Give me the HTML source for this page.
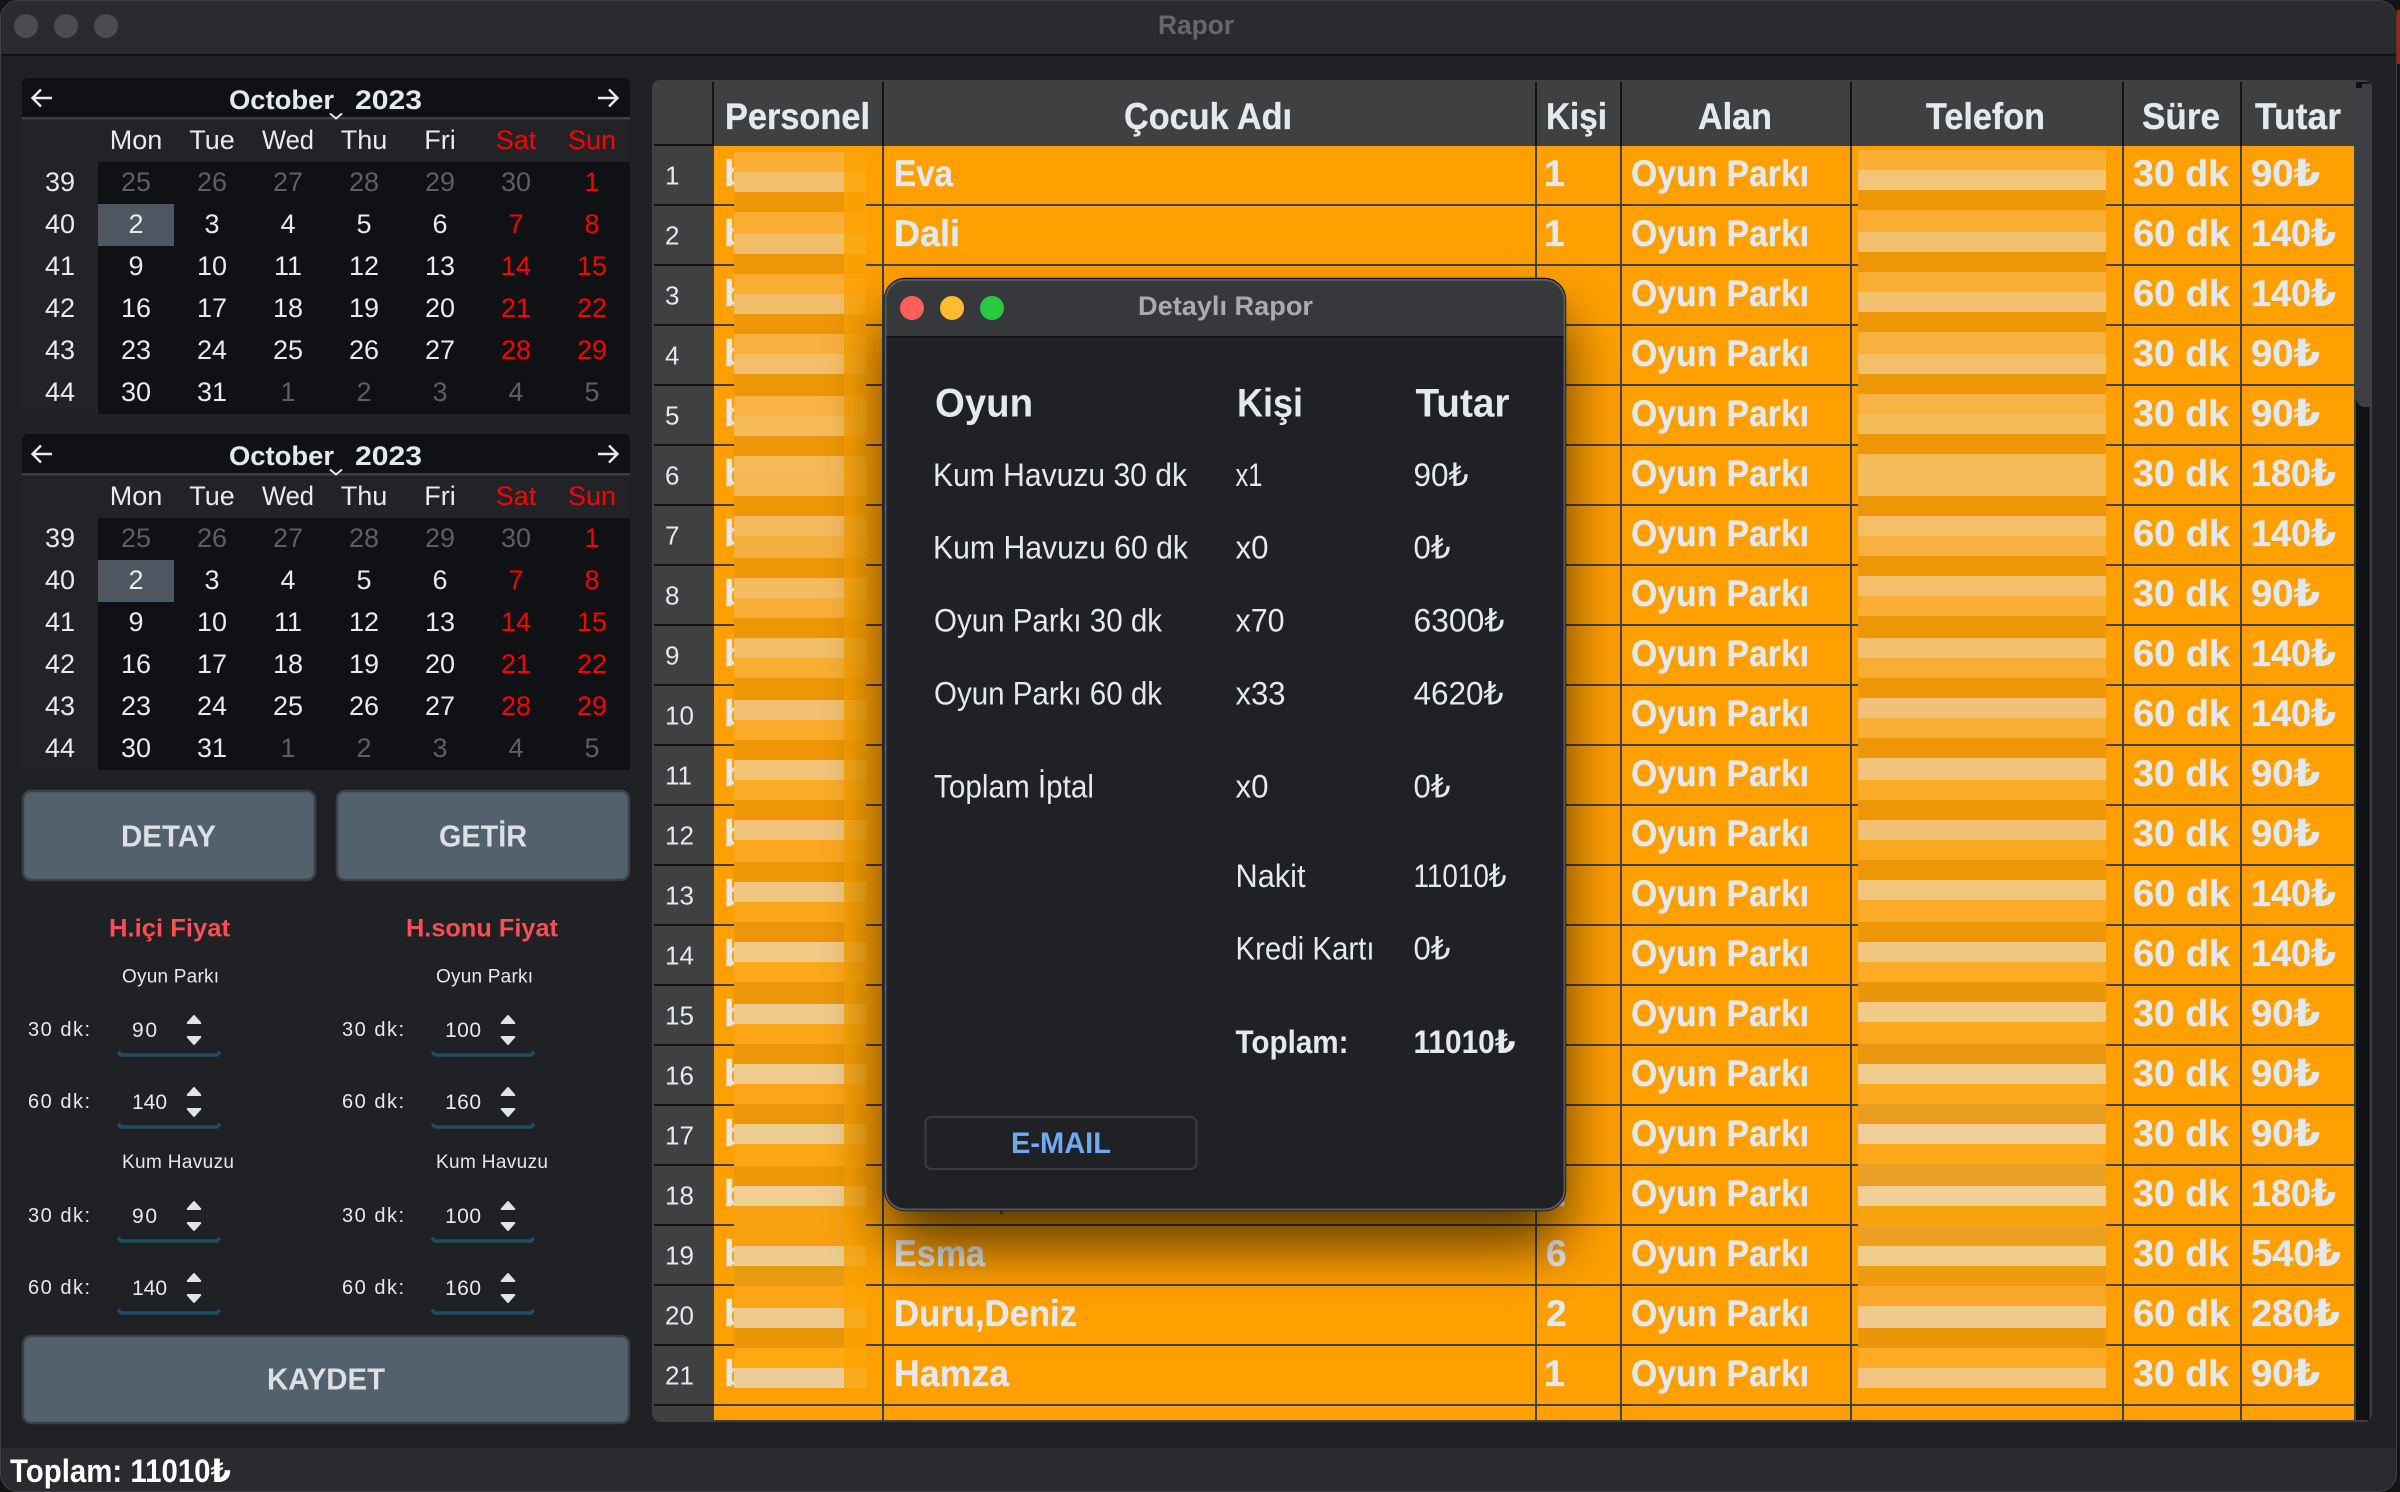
<!DOCTYPE html>
<html lang="tr"><head><meta charset="utf-8"><title>Rapor</title>
<style>
html,body{margin:0;padding:0;background:#141416;width:2400px;height:1492px;overflow:hidden}
svg{display:block}
text{font-family:"Liberation Sans","DejaVu Sans",sans-serif;fill:#e5e8ec;white-space:pre}
.c text{font-size:27px;text-anchor:middle;fill:#e8eaed}
.c .m{fill:#5e5f62}
.c .r{fill:#ff0000}
.d{font-size:37px;font-weight:700;stroke:#e5e8ec;stroke-width:.3px}
.n{font-size:26px}
.h{font-size:37px;font-weight:700;stroke:#e5e8ec;stroke-width:.3px}
.t{font-size:32px}
.b{font-size:32px;font-weight:700}
.s{font-size:20px}
.v{font-size:21px}
</style></head><body>
<svg xmlns="http://www.w3.org/2000/svg" width="2400" height="1492" viewBox="0 0 2400 1492">
<defs>
<clipPath id="win"><rect x="0" y="0" width="2397" height="1492" rx="18"/></clipPath>
<clipPath id="tbl"><rect x="652" y="80" width="1720" height="1342" rx="8"/></clipPath>
<clipPath id="dlg"><rect x="885" y="279" width="680" height="931" rx="20"/></clipPath>
<filter id="sh" x="-20%" y="-20%" width="140%" height="140%"><feGaussianBlur stdDeviation="30"/></filter>
<g id="spin">
<polygon points="187.7,1023 200.3,1023 194,1016" fill="#e1e4e7" stroke="#e1e4e7" stroke-width="2" stroke-linejoin="round"/>
<polygon points="187.7,1037 200.3,1037 194,1044" fill="#e1e4e7" stroke="#e1e4e7" stroke-width="2" stroke-linejoin="round"/>
<path d="M118 1052l3 3h96l3-3" fill="none" stroke="#1f4d66" stroke-width="3.5"/>
</g>
<g id="calbg">
<rect x="22" y="78" width="608" height="336" rx="6" fill="#222326"/>
<path d="M22 118V84a6 6 0 0 1 6-6H624a6 6 0 0 1 6 6V118Z" fill="#101114"/>
<rect x="22" y="117" width="608" height="2.5" fill="#3d3e40"/>
<rect x="98" y="162" width="532" height="252" fill="#101114"/>
<rect x="98" y="204" width="76" height="42" fill="#4e5661"/>
<path d="M52 98H33M41 89.5L32.5 98L41 106.5" fill="none" stroke="#e8eaed" stroke-width="2.4"/>
<path d="M598 98H617M609 89.5L617.5 98L609 106.5" fill="none" stroke="#e8eaed" stroke-width="2.4"/>
<path d="M330 113.5L336 118.5L342 113.5" fill="none" stroke="#e8eaed" stroke-width="2"/>
</g>
</defs>

<g clip-path="url(#win)">
<rect x="0" y="0" width="2400" height="1492" fill="#202124"/>
<rect x="0" y="0" width="2400" height="54" fill="#2a2b2e"/>
<rect x="0" y="54" width="2400" height="1.5" fill="#0b0b0c"/>
<circle cx="26" cy="26" r="12" fill="#4b4c4f"/><circle cx="66" cy="26" r="12" fill="#4b4c4f"/><circle cx="106" cy="26" r="12" fill="#4b4c4f"/>
<text x="1158" y="34" font-size="27" font-weight="700" style="fill:#66676a" textLength="76" lengthAdjust="spacingAndGlyphs">Rapor</text>
<rect x="0" y="1448" width="2400" height="44" fill="#2a2b2e"/>
<text x="10" y="1482" font-size="32" font-weight="700" style="fill:#fff" textLength="221" lengthAdjust="spacingAndGlyphs">Toplam: 11010₺</text>
</g>
<rect x="0.5" y="0.5" width="2396" height="1491" rx="18" fill="none" stroke="#3e3e40" stroke-width="1"/>
<rect x="2397" y="10" width="3" height="54" fill="#c01010"/>

<!-- Calendar 1 -->
<use href="#calbg"/>
<g>
<text x="229" y="109" font-size="27" font-weight="700" textLength="105" lengthAdjust="spacingAndGlyphs">October</text>
<text x="355" y="109" font-size="27" font-weight="700" textLength="67" lengthAdjust="spacingAndGlyphs">2023</text>
<g class="c">
<text x="136" y="149">Mon</text><text x="212" y="149">Tue</text><text x="288" y="149" textLength="52" lengthAdjust="spacingAndGlyphs">Wed</text><text x="364" y="149">Thu</text><text x="440" y="149">Fri</text><text class="r" x="516" y="149">Sat</text><text class="r" x="592" y="149">Sun</text>
<g transform="translate(0,-1)"><text x="60" y="192">39</text><text class="m" x="136" y="192">25</text><text class="m" x="212" y="192">26</text><text class="m" x="288" y="192">27</text><text class="m" x="364" y="192">28</text><text class="m" x="440" y="192">29</text><text class="m" x="516" y="192">30</text><text class="r" x="592" y="192">1</text></g>
<g transform="translate(0,41)"><text x="60" y="192">40</text><text x="136" y="192">2</text><text x="212" y="192">3</text><text x="288" y="192">4</text><text x="364" y="192">5</text><text x="440" y="192">6</text><text class="r" x="516" y="192">7</text><text class="r" x="592" y="192">8</text></g>
<g transform="translate(0,83)"><text x="60" y="192">41</text><text x="136" y="192">9</text><text x="212" y="192">10</text><text x="288" y="192">11</text><text x="364" y="192">12</text><text x="440" y="192">13</text><text class="r" x="516" y="192">14</text><text class="r" x="592" y="192">15</text></g>
<g transform="translate(0,125)"><text x="60" y="192">42</text><text x="136" y="192">16</text><text x="212" y="192">17</text><text x="288" y="192">18</text><text x="364" y="192">19</text><text x="440" y="192">20</text><text class="r" x="516" y="192">21</text><text class="r" x="592" y="192">22</text></g>
<g transform="translate(0,167)"><text x="60" y="192">43</text><text x="136" y="192">23</text><text x="212" y="192">24</text><text x="288" y="192">25</text><text x="364" y="192">26</text><text x="440" y="192">27</text><text class="r" x="516" y="192">28</text><text class="r" x="592" y="192">29</text></g>
<g transform="translate(0,209)"><text x="60" y="192">44</text><text x="136" y="192">30</text><text x="212" y="192">31</text><text class="m" x="288" y="192">1</text><text class="m" x="364" y="192">2</text><text class="m" x="440" y="192">3</text><text class="m" x="516" y="192">4</text><text class="m" x="592" y="192">5</text></g>
</g></g>

<!-- Calendar 2 -->
<g transform="translate(0,356)">
<use href="#calbg"/>
<text x="229" y="109" font-size="27" font-weight="700" textLength="105" lengthAdjust="spacingAndGlyphs">October</text>
<text x="355" y="109" font-size="27" font-weight="700" textLength="67" lengthAdjust="spacingAndGlyphs">2023</text>
<g class="c">
<text x="136" y="149">Mon</text><text x="212" y="149">Tue</text><text x="288" y="149" textLength="52" lengthAdjust="spacingAndGlyphs">Wed</text><text x="364" y="149">Thu</text><text x="440" y="149">Fri</text><text class="r" x="516" y="149">Sat</text><text class="r" x="592" y="149">Sun</text>
<g transform="translate(0,-1)"><text x="60" y="192">39</text><text class="m" x="136" y="192">25</text><text class="m" x="212" y="192">26</text><text class="m" x="288" y="192">27</text><text class="m" x="364" y="192">28</text><text class="m" x="440" y="192">29</text><text class="m" x="516" y="192">30</text><text class="r" x="592" y="192">1</text></g>
<g transform="translate(0,41)"><text x="60" y="192">40</text><text x="136" y="192">2</text><text x="212" y="192">3</text><text x="288" y="192">4</text><text x="364" y="192">5</text><text x="440" y="192">6</text><text class="r" x="516" y="192">7</text><text class="r" x="592" y="192">8</text></g>
<g transform="translate(0,83)"><text x="60" y="192">41</text><text x="136" y="192">9</text><text x="212" y="192">10</text><text x="288" y="192">11</text><text x="364" y="192">12</text><text x="440" y="192">13</text><text class="r" x="516" y="192">14</text><text class="r" x="592" y="192">15</text></g>
<g transform="translate(0,125)"><text x="60" y="192">42</text><text x="136" y="192">16</text><text x="212" y="192">17</text><text x="288" y="192">18</text><text x="364" y="192">19</text><text x="440" y="192">20</text><text class="r" x="516" y="192">21</text><text class="r" x="592" y="192">22</text></g>
<g transform="translate(0,167)"><text x="60" y="192">43</text><text x="136" y="192">23</text><text x="212" y="192">24</text><text x="288" y="192">25</text><text x="364" y="192">26</text><text x="440" y="192">27</text><text class="r" x="516" y="192">28</text><text class="r" x="592" y="192">29</text></g>
<g transform="translate(0,209)"><text x="60" y="192">44</text><text x="136" y="192">30</text><text x="212" y="192">31</text><text class="m" x="288" y="192">1</text><text class="m" x="364" y="192">2</text><text class="m" x="440" y="192">3</text><text class="m" x="516" y="192">4</text><text class="m" x="592" y="192">5</text></g>
</g></g>

<!-- Buttons -->
<rect x="23" y="791" width="292" height="89" rx="8" fill="#53606e" stroke="#3d4147" stroke-width="2.5"/>
<rect x="337" y="791" width="292" height="89" rx="8" fill="#53606e" stroke="#3d4147" stroke-width="2.5"/>
<rect x="23" y="1336" width="606" height="87" rx="8" fill="#53606e" stroke="#3d4147" stroke-width="2.5"/>
<text x="121" y="846.5" font-size="31" font-weight="700" style="fill:#dcdfe3" textLength="95" lengthAdjust="spacingAndGlyphs">DETAY</text>
<text x="439" y="846.5" font-size="31" font-weight="700" style="fill:#dcdfe3" textLength="88" lengthAdjust="spacingAndGlyphs">GETİR</text>
<text x="267" y="1389.5" font-size="31" font-weight="700" style="fill:#dcdfe3" textLength="118" lengthAdjust="spacingAndGlyphs">KAYDET</text>

<!-- Prices -->
<text x="109" y="936.5" font-size="25" font-weight="700" style="fill:#ff4d54" textLength="121" lengthAdjust="spacingAndGlyphs">H.içi Fiyat</text>
<text x="406" y="936.5" font-size="25" font-weight="700" style="fill:#ff4d54" textLength="152" lengthAdjust="spacingAndGlyphs">H.sonu Fiyat</text>
<text class="s" x="122" y="982.5" style="font-size:19px" textLength="97">Oyun Parkı</text>
<text class="s" x="436" y="982.5" style="font-size:19px" textLength="97">Oyun Parkı</text>
<text class="s" x="122" y="1168" style="font-size:19px" textLength="112">Kum Havuzu</text>
<text class="s" x="436" y="1168" style="font-size:19px" textLength="112">Kum Havuzu</text>

<text class="s" x="28" y="1036" textLength="62">30 dk:</text><text class="s" x="28" y="1108" textLength="62">60 dk:</text>
<text class="s" x="28" y="1222" textLength="62">30 dk:</text><text class="s" x="28" y="1294" textLength="62">60 dk:</text>
<text class="s" x="342" y="1036" textLength="62">30 dk:</text><text class="s" x="342" y="1108" textLength="62">60 dk:</text>
<text class="s" x="342" y="1222" textLength="62">30 dk:</text><text class="s" x="342" y="1294" textLength="62">60 dk:</text>
<text class="v" x="132" y="1037" textLength="25">90</text><text class="v" x="132" y="1109" textLength="35">140</text>
<text class="v" x="132" y="1223" textLength="25">90</text><text class="v" x="132" y="1295" textLength="35">140</text>
<text class="v" x="445" y="1037" textLength="36">100</text><text class="v" x="445" y="1109" textLength="36">160</text>
<text class="v" x="445" y="1223" textLength="36">100</text><text class="v" x="445" y="1295" textLength="36">160</text>
<use href="#spin"/><use href="#spin" y="72"/><use href="#spin" y="186"/><use href="#spin" y="258"/>
<use href="#spin" x="314"/><use href="#spin" x="314" y="72"/><use href="#spin" x="314" y="186"/><use href="#spin" x="314" y="258"/>

<!-- Table -->
<g clip-path="url(#tbl)">
<rect x="652" y="80" width="1720" height="1342" fill="#3f4042"/>
<rect x="714" y="146" width="1640" height="1274" fill="#ffa000"/>
<rect x="2356" y="82" width="13.5" height="1338" fill="#111214"/>
<path d="M2356 84V398a9 9 0 0 0 9 9h5V84Z" fill="#3e3f42"/>
<rect x="2356" y="82" width="6" height="6" fill="#111214"/>
<!-- header verticals -->
<g fill="#121316">
<rect x="712" y="82" width="2" height="64"/><rect x="882" y="82" width="2" height="64"/><rect x="1535" y="82" width="2" height="64"/><rect x="1620" y="82" width="2" height="64"/><rect x="1850" y="82" width="2" height="64"/><rect x="2122" y="82" width="2" height="64"/><rect x="2240" y="82" width="2" height="64"/>
<rect x="654" y="144" width="60" height="2"/>
<rect x="654" y="204" width="60" height="2"/><rect x="654" y="264" width="60" height="2"/><rect x="654" y="324" width="60" height="2"/><rect x="654" y="384" width="60" height="2"/><rect x="654" y="444" width="60" height="2"/><rect x="654" y="504" width="60" height="2"/><rect x="654" y="564" width="60" height="2"/><rect x="654" y="624" width="60" height="2"/><rect x="654" y="684" width="60" height="2"/><rect x="654" y="744" width="60" height="2"/><rect x="654" y="804" width="60" height="2"/><rect x="654" y="864" width="60" height="2"/><rect x="654" y="924" width="60" height="2"/><rect x="654" y="984" width="60" height="2"/><rect x="654" y="1044" width="60" height="2"/><rect x="654" y="1104" width="60" height="2"/><rect x="654" y="1164" width="60" height="2"/><rect x="654" y="1224" width="60" height="2"/><rect x="654" y="1284" width="60" height="2"/><rect x="654" y="1344" width="60" height="2"/><rect x="654" y="1404" width="60" height="2"/>
</g>
<!-- data grid -->
<g fill="#404144">
<rect x="882" y="146" width="2" height="1274"/><rect x="1535" y="146" width="2" height="1274"/><rect x="1620" y="146" width="2" height="1274"/><rect x="1850" y="146" width="2" height="1274"/><rect x="2122" y="146" width="2" height="1274"/><rect x="2240" y="146" width="2" height="1274"/>
<rect x="714" y="204" width="1640" height="2"/><rect x="714" y="264" width="1640" height="2"/><rect x="714" y="324" width="1640" height="2"/><rect x="714" y="384" width="1640" height="2"/><rect x="714" y="444" width="1640" height="2"/><rect x="714" y="504" width="1640" height="2"/><rect x="714" y="564" width="1640" height="2"/><rect x="714" y="624" width="1640" height="2"/><rect x="714" y="684" width="1640" height="2"/><rect x="714" y="744" width="1640" height="2"/><rect x="714" y="804" width="1640" height="2"/><rect x="714" y="864" width="1640" height="2"/><rect x="714" y="924" width="1640" height="2"/><rect x="714" y="984" width="1640" height="2"/><rect x="714" y="1044" width="1640" height="2"/><rect x="714" y="1104" width="1640" height="2"/><rect x="714" y="1164" width="1640" height="2"/><rect x="714" y="1224" width="1640" height="2"/><rect x="714" y="1284" width="1640" height="2"/><rect x="714" y="1344" width="1640" height="2"/><rect x="714" y="1404" width="1640" height="2"/>
</g>
<!-- header text -->
<text class="h" x="725" y="129" textLength="145" lengthAdjust="spacingAndGlyphs">Personel</text>
<text class="h" x="1124" y="129" textLength="168" lengthAdjust="spacingAndGlyphs">Çocuk Adı</text>
<text class="h" x="1546" y="129" textLength="61" lengthAdjust="spacingAndGlyphs">Kişi</text>
<text class="h" x="1698" y="129" textLength="74" lengthAdjust="spacingAndGlyphs">Alan</text>
<text class="h" x="1926" y="129" textLength="119" lengthAdjust="spacingAndGlyphs">Telefon</text>
<text class="h" x="2142" y="129" textLength="78" lengthAdjust="spacingAndGlyphs">Süre</text>
<text class="h" x="2255" y="129" textLength="86" lengthAdjust="spacingAndGlyphs">Tutar</text>
<!-- names -->
<text class="d" x="894" y="186" textLength="59" lengthAdjust="spacingAndGlyphs">Eva</text>
<text class="d" x="894" y="246" textLength="66" lengthAdjust="spacingAndGlyphs">Dali</text>
<text class="d" x="894" y="1266" textLength="91" lengthAdjust="spacingAndGlyphs">Esma</text>
<text class="d" x="894" y="1326" textLength="183" lengthAdjust="spacingAndGlyphs">Duru,Deniz</text>
<text class="d" x="894" y="1386" textLength="115" lengthAdjust="spacingAndGlyphs">Hamza</text>
<text class="d" x="1544" y="186">1</text><text class="d" x="1544" y="246">1</text><text class="d" x="1545" y="1206">2</text><text class="d" x="1546" y="1266">6</text><text class="d" x="1546" y="1326">2</text><text class="d" x="1544" y="1386">1</text>
<rect x="1000" y="1209" width="3" height="5" fill="#5a6470"/>
<!-- rows -->
<g><text class="n" x="665" y="184.5">1</text><text class="d" x="724" y="186">b</text><text class="d" x="1631" y="186" textLength="178" lengthAdjust="spacingAndGlyphs">Oyun Parkı</text><text class="d" x="2133" y="186" textLength="96" lengthAdjust="spacingAndGlyphs">30 dk</text><text class="d" x="2251" y="186" textLength="69" lengthAdjust="spacingAndGlyphs">90₺</text></g>
<g transform="translate(0,60)"><text class="n" x="665" y="184.5">2</text><text class="d" x="724" y="186">b</text><text class="d" x="1631" y="186" textLength="178" lengthAdjust="spacingAndGlyphs">Oyun Parkı</text><text class="d" x="2133" y="186" textLength="97" lengthAdjust="spacingAndGlyphs">60 dk</text><text class="d" x="2251" y="186" textLength="85" lengthAdjust="spacingAndGlyphs">140₺</text></g>
<g transform="translate(0,120)"><text class="n" x="665" y="184.5">3</text><text class="d" x="724" y="186">b</text><text class="d" x="1631" y="186" textLength="178" lengthAdjust="spacingAndGlyphs">Oyun Parkı</text><text class="d" x="2133" y="186" textLength="97" lengthAdjust="spacingAndGlyphs">60 dk</text><text class="d" x="2251" y="186" textLength="85" lengthAdjust="spacingAndGlyphs">140₺</text></g>
<g transform="translate(0,180)"><text class="n" x="665" y="184.5">4</text><text class="d" x="724" y="186">b</text><text class="d" x="1631" y="186" textLength="178" lengthAdjust="spacingAndGlyphs">Oyun Parkı</text><text class="d" x="2133" y="186" textLength="96" lengthAdjust="spacingAndGlyphs">30 dk</text><text class="d" x="2251" y="186" textLength="69" lengthAdjust="spacingAndGlyphs">90₺</text></g>
<g transform="translate(0,240)"><text class="n" x="665" y="184.5">5</text><text class="d" x="724" y="186">b</text><text class="d" x="1631" y="186" textLength="178" lengthAdjust="spacingAndGlyphs">Oyun Parkı</text><text class="d" x="2133" y="186" textLength="96" lengthAdjust="spacingAndGlyphs">30 dk</text><text class="d" x="2251" y="186" textLength="69" lengthAdjust="spacingAndGlyphs">90₺</text></g>
<g transform="translate(0,300)"><text class="n" x="665" y="184.5">6</text><text class="d" x="724" y="186">b</text><text class="d" x="1631" y="186" textLength="178" lengthAdjust="spacingAndGlyphs">Oyun Parkı</text><text class="d" x="2133" y="186" textLength="96" lengthAdjust="spacingAndGlyphs">30 dk</text><text class="d" x="2251" y="186" textLength="85" lengthAdjust="spacingAndGlyphs">180₺</text></g>
<g transform="translate(0,360)"><text class="n" x="665" y="184.5">7</text><text class="d" x="724" y="186">b</text><text class="d" x="1631" y="186" textLength="178" lengthAdjust="spacingAndGlyphs">Oyun Parkı</text><text class="d" x="2133" y="186" textLength="97" lengthAdjust="spacingAndGlyphs">60 dk</text><text class="d" x="2251" y="186" textLength="85" lengthAdjust="spacingAndGlyphs">140₺</text></g>
<g transform="translate(0,420)"><text class="n" x="665" y="184.5">8</text><text class="d" x="724" y="186">b</text><text class="d" x="1631" y="186" textLength="178" lengthAdjust="spacingAndGlyphs">Oyun Parkı</text><text class="d" x="2133" y="186" textLength="96" lengthAdjust="spacingAndGlyphs">30 dk</text><text class="d" x="2251" y="186" textLength="69" lengthAdjust="spacingAndGlyphs">90₺</text></g>
<g transform="translate(0,480)"><text class="n" x="665" y="184.5">9</text><text class="d" x="724" y="186">b</text><text class="d" x="1631" y="186" textLength="178" lengthAdjust="spacingAndGlyphs">Oyun Parkı</text><text class="d" x="2133" y="186" textLength="97" lengthAdjust="spacingAndGlyphs">60 dk</text><text class="d" x="2251" y="186" textLength="85" lengthAdjust="spacingAndGlyphs">140₺</text></g>
<g transform="translate(0,540)"><text class="n" x="665" y="184.5">10</text><text class="d" x="724" y="186">b</text><text class="d" x="1631" y="186" textLength="178" lengthAdjust="spacingAndGlyphs">Oyun Parkı</text><text class="d" x="2133" y="186" textLength="97" lengthAdjust="spacingAndGlyphs">60 dk</text><text class="d" x="2251" y="186" textLength="85" lengthAdjust="spacingAndGlyphs">140₺</text></g>
<g transform="translate(0,600)"><text class="n" x="665" y="184.5">11</text><text class="d" x="724" y="186">b</text><text class="d" x="1631" y="186" textLength="178" lengthAdjust="spacingAndGlyphs">Oyun Parkı</text><text class="d" x="2133" y="186" textLength="96" lengthAdjust="spacingAndGlyphs">30 dk</text><text class="d" x="2251" y="186" textLength="69" lengthAdjust="spacingAndGlyphs">90₺</text></g>
<g transform="translate(0,660)"><text class="n" x="665" y="184.5">12</text><text class="d" x="724" y="186">b</text><text class="d" x="1631" y="186" textLength="178" lengthAdjust="spacingAndGlyphs">Oyun Parkı</text><text class="d" x="2133" y="186" textLength="96" lengthAdjust="spacingAndGlyphs">30 dk</text><text class="d" x="2251" y="186" textLength="69" lengthAdjust="spacingAndGlyphs">90₺</text></g>
<g transform="translate(0,720)"><text class="n" x="665" y="184.5">13</text><text class="d" x="724" y="186">b</text><text class="d" x="1631" y="186" textLength="178" lengthAdjust="spacingAndGlyphs">Oyun Parkı</text><text class="d" x="2133" y="186" textLength="97" lengthAdjust="spacingAndGlyphs">60 dk</text><text class="d" x="2251" y="186" textLength="85" lengthAdjust="spacingAndGlyphs">140₺</text></g>
<g transform="translate(0,780)"><text class="n" x="665" y="184.5">14</text><text class="d" x="724" y="186">b</text><text class="d" x="1631" y="186" textLength="178" lengthAdjust="spacingAndGlyphs">Oyun Parkı</text><text class="d" x="2133" y="186" textLength="97" lengthAdjust="spacingAndGlyphs">60 dk</text><text class="d" x="2251" y="186" textLength="85" lengthAdjust="spacingAndGlyphs">140₺</text></g>
<g transform="translate(0,840)"><text class="n" x="665" y="184.5">15</text><text class="d" x="724" y="186">b</text><text class="d" x="1631" y="186" textLength="178" lengthAdjust="spacingAndGlyphs">Oyun Parkı</text><text class="d" x="2133" y="186" textLength="96" lengthAdjust="spacingAndGlyphs">30 dk</text><text class="d" x="2251" y="186" textLength="69" lengthAdjust="spacingAndGlyphs">90₺</text></g>
<g transform="translate(0,900)"><text class="n" x="665" y="184.5">16</text><text class="d" x="724" y="186">b</text><text class="d" x="1631" y="186" textLength="178" lengthAdjust="spacingAndGlyphs">Oyun Parkı</text><text class="d" x="2133" y="186" textLength="96" lengthAdjust="spacingAndGlyphs">30 dk</text><text class="d" x="2251" y="186" textLength="69" lengthAdjust="spacingAndGlyphs">90₺</text></g>
<g transform="translate(0,960)"><text class="n" x="665" y="184.5">17</text><text class="d" x="724" y="186">b</text><text class="d" x="1631" y="186" textLength="178" lengthAdjust="spacingAndGlyphs">Oyun Parkı</text><text class="d" x="2133" y="186" textLength="96" lengthAdjust="spacingAndGlyphs">30 dk</text><text class="d" x="2251" y="186" textLength="69" lengthAdjust="spacingAndGlyphs">90₺</text></g>
<g transform="translate(0,1020)"><text class="n" x="665" y="184.5">18</text><text class="d" x="724" y="186">b</text><text class="d" x="1631" y="186" textLength="178" lengthAdjust="spacingAndGlyphs">Oyun Parkı</text><text class="d" x="2133" y="186" textLength="96" lengthAdjust="spacingAndGlyphs">30 dk</text><text class="d" x="2251" y="186" textLength="85" lengthAdjust="spacingAndGlyphs">180₺</text></g>
<g transform="translate(0,1080)"><text class="n" x="665" y="184.5">19</text><text class="d" x="724" y="186">b</text><text class="d" x="1631" y="186" textLength="178" lengthAdjust="spacingAndGlyphs">Oyun Parkı</text><text class="d" x="2133" y="186" textLength="96" lengthAdjust="spacingAndGlyphs">30 dk</text><text class="d" x="2251" y="186" textLength="90" lengthAdjust="spacingAndGlyphs">540₺</text></g>
<g transform="translate(0,1140)"><text class="n" x="665" y="184.5">20</text><text class="d" x="724" y="186">b</text><text class="d" x="1631" y="186" textLength="178" lengthAdjust="spacingAndGlyphs">Oyun Parkı</text><text class="d" x="2133" y="186" textLength="97" lengthAdjust="spacingAndGlyphs">60 dk</text><text class="d" x="2251" y="186" textLength="89" lengthAdjust="spacingAndGlyphs">280₺</text></g>
<g transform="translate(0,1200)"><text class="n" x="665" y="184.5">21</text><text class="d" x="724" y="186">b</text><text class="d" x="1631" y="186" textLength="178" lengthAdjust="spacingAndGlyphs">Oyun Parkı</text><text class="d" x="2133" y="186" textLength="96" lengthAdjust="spacingAndGlyphs">30 dk</text><text class="d" x="2251" y="186" textLength="69" lengthAdjust="spacingAndGlyphs">90₺</text></g>

<!-- pixelated Personel -->
<g>
<rect x="734" y="152" width="132" height="20" fill="#f9b035"/><rect x="734" y="172" width="132" height="20" fill="#f2c070"/><rect x="734" y="192" width="132" height="20" fill="#ed9606"/>
<rect x="734" y="212" width="132" height="22" fill="#f9ae33"/><rect x="734" y="234" width="132" height="20" fill="#f2be6a"/><rect x="734" y="254" width="132" height="20" fill="#ed9606"/>
<rect x="734" y="274" width="132" height="20" fill="#f9ae33"/><rect x="734" y="294" width="132" height="20" fill="#f2be6a"/><rect x="734" y="314" width="132" height="20" fill="#ed9606"/>
<rect x="734" y="334" width="132" height="20" fill="#f8b040"/><rect x="734" y="354" width="132" height="20" fill="#f4bf66"/><rect x="734" y="374" width="132" height="22" fill="#ed9606"/>
<rect x="734" y="396" width="132" height="20" fill="#f8b245"/><rect x="734" y="416" width="132" height="20" fill="#f6bc58"/><rect x="734" y="436" width="132" height="20" fill="#ed9606"/>
<rect x="734" y="456" width="132" height="20" fill="#f5b95a"/><rect x="734" y="476" width="132" height="20" fill="#f5b754"/><rect x="734" y="496" width="132" height="20" fill="#ed9606"/>
<rect x="734" y="516" width="132" height="20" fill="#f4ba5e"/><rect x="734" y="536" width="132" height="22" fill="#f7b040"/><rect x="734" y="558" width="132" height="20" fill="#ed9606"/>
<rect x="734" y="578" width="132" height="20" fill="#f3bc60"/><rect x="734" y="598" width="132" height="20" fill="#f9b038"/><rect x="734" y="618" width="132" height="20" fill="#ed9606"/>
<rect x="734" y="638" width="132" height="20" fill="#f2be68"/><rect x="734" y="658" width="132" height="20" fill="#f9ae30"/><rect x="734" y="678" width="132" height="22" fill="#ed9606"/>
<rect x="734" y="700" width="132" height="20" fill="#f2c070"/><rect x="734" y="720" width="132" height="20" fill="#fbab28"/><rect x="734" y="740" width="132" height="20" fill="#ed9606"/>
<rect x="734" y="760" width="132" height="20" fill="#f2c276"/><rect x="734" y="780" width="132" height="20" fill="#fbab28"/><rect x="734" y="800" width="132" height="20" fill="#ed9606"/>
<rect x="734" y="820" width="132" height="20" fill="#f2c47a"/><rect x="734" y="840" width="132" height="22" fill="#fba820"/><rect x="734" y="862" width="132" height="20" fill="#ed9606"/>
<rect x="734" y="882" width="132" height="20" fill="#f1c680"/><rect x="734" y="902" width="132" height="20" fill="#fba61c"/><rect x="734" y="922" width="132" height="20" fill="#ec9608"/>
<rect x="734" y="942" width="132" height="20" fill="#f1c884"/><rect x="734" y="962" width="132" height="20" fill="#fca71c"/><rect x="734" y="982" width="132" height="22" fill="#ec9608"/>
<rect x="734" y="1004" width="132" height="20" fill="#f0ca88"/><rect x="734" y="1024" width="132" height="20" fill="#fca518"/><rect x="734" y="1044" width="132" height="20" fill="#ec960a"/>
<rect x="734" y="1064" width="132" height="20" fill="#efcc8e"/><rect x="734" y="1084" width="132" height="20" fill="#fca518"/><rect x="734" y="1104" width="132" height="20" fill="#ec960c"/>
<rect x="734" y="1124" width="132" height="20" fill="#efcc90"/><rect x="734" y="1144" width="132" height="22" fill="#fca515"/><rect x="734" y="1166" width="132" height="20" fill="#ee9808"/>
<rect x="734" y="1186" width="132" height="20" fill="#efcf95"/><rect x="734" y="1206" width="132" height="20" fill="#f8a212"/><rect x="734" y="1226" width="132" height="20" fill="#f8a010"/>
<rect x="734" y="1246" width="132" height="20" fill="#eccb8c"/><rect x="734" y="1266" width="132" height="20" fill="#ea9a12"/><rect x="734" y="1286" width="132" height="22" fill="#fca515"/>
<rect x="734" y="1308" width="132" height="20" fill="#ecca8e"/><rect x="734" y="1328" width="132" height="20" fill="#ea9608"/><rect x="734" y="1348" width="132" height="20" fill="#fea812"/>
<rect x="734" y="1368" width="132" height="20" fill="#ecce98"/>
<rect x="844" y="152" width="22" height="1236" fill="#fca200" opacity=".8"/>
</g>

<!-- pixelated Telefon -->
<g>
<rect x="1858" y="150" width="248" height="20" fill="#f9b035"/><rect x="1858" y="170" width="248" height="20" fill="#f4c478"/><rect x="1858" y="190" width="248" height="20" fill="#ed9606"/>
<rect x="1858" y="210" width="248" height="22" fill="#f9ae33"/><rect x="1858" y="232" width="248" height="20" fill="#f3bf6c"/><rect x="1858" y="252" width="248" height="20" fill="#ed9606"/>
<rect x="1858" y="272" width="248" height="20" fill="#f9ae33"/><rect x="1858" y="292" width="248" height="20" fill="#f4c26e"/><rect x="1858" y="312" width="248" height="20" fill="#ed9606"/>
<rect x="1858" y="332" width="248" height="22" fill="#f8b040"/><rect x="1858" y="354" width="248" height="20" fill="#f4bf66"/><rect x="1858" y="374" width="248" height="20" fill="#ed9606"/>
<rect x="1858" y="394" width="248" height="20" fill="#f8b245"/><rect x="1858" y="414" width="248" height="20" fill="#f6bc58"/><rect x="1858" y="434" width="248" height="20" fill="#ed9606"/>
<rect x="1858" y="454" width="248" height="42" fill="#f5bc5c"/><rect x="1858" y="496" width="248" height="20" fill="#ed9606"/>
<rect x="1858" y="516" width="248" height="20" fill="#f4bf66"/><rect x="1858" y="536" width="248" height="20" fill="#f8b040"/><rect x="1858" y="556" width="248" height="20" fill="#ed9606"/>
<rect x="1858" y="576" width="248" height="20" fill="#f3bf6b"/><rect x="1858" y="596" width="248" height="20" fill="#f9af35"/><rect x="1858" y="616" width="248" height="22" fill="#ed9606"/>
<rect x="1858" y="638" width="248" height="20" fill="#f3c06e"/><rect x="1858" y="658" width="248" height="20" fill="#f9ae33"/><rect x="1858" y="678" width="248" height="20" fill="#ed9606"/>
<rect x="1858" y="698" width="248" height="20" fill="#f2c176"/><rect x="1858" y="718" width="248" height="20" fill="#fab035"/><rect x="1858" y="738" width="248" height="20" fill="#ed9606"/>
<rect x="1858" y="758" width="248" height="22" fill="#f2c47a"/><rect x="1858" y="780" width="248" height="20" fill="#fbad2a"/><rect x="1858" y="800" width="248" height="20" fill="#ed9606"/>
<rect x="1858" y="820" width="248" height="20" fill="#f2c274"/><rect x="1858" y="840" width="248" height="20" fill="#fbaa20"/><rect x="1858" y="860" width="248" height="20" fill="#ed9606"/>
<rect x="1858" y="880" width="248" height="20" fill="#f1c67c"/><rect x="1858" y="900" width="248" height="22" fill="#fcab28"/><rect x="1858" y="922" width="248" height="20" fill="#ed9606"/>
<rect x="1858" y="942" width="248" height="20" fill="#f1c880"/><rect x="1858" y="962" width="248" height="20" fill="#fcab22"/><rect x="1858" y="982" width="248" height="20" fill="#e99609"/>
<rect x="1858" y="1002" width="248" height="20" fill="#f0cb88"/><rect x="1858" y="1022" width="248" height="22" fill="#fca81e"/><rect x="1858" y="1044" width="248" height="20" fill="#e89810"/>
<rect x="1858" y="1064" width="248" height="20" fill="#efcc8c"/><rect x="1858" y="1084" width="248" height="20" fill="#fca81c"/><rect x="1858" y="1104" width="248" height="20" fill="#e89d20"/>
<rect x="1858" y="1124" width="248" height="20" fill="#efcf95"/><rect x="1858" y="1144" width="248" height="20" fill="#fda818"/><rect x="1858" y="1164" width="248" height="22" fill="#e8a025"/>
<rect x="1858" y="1186" width="248" height="20" fill="#efcf95"/><rect x="1858" y="1206" width="248" height="20" fill="#f8a210"/><rect x="1858" y="1226" width="248" height="20" fill="#eba020"/>
<rect x="1858" y="1246" width="248" height="20" fill="#eecc8c"/><rect x="1858" y="1266" width="248" height="20" fill="#ef9a10"/><rect x="1858" y="1286" width="248" height="20" fill="#f7a828"/>
<rect x="1858" y="1306" width="248" height="22" fill="#eecb8c"/><rect x="1858" y="1328" width="248" height="20" fill="#ea9608"/><rect x="1858" y="1348" width="248" height="20" fill="#fdaa25"/>
<rect x="1858" y="1368" width="248" height="20" fill="#f0c680"/>
</g>
</g>

<!-- dialog shadow -->
<rect x="885" y="314" width="680" height="931" rx="24" fill="#000" opacity=".65" filter="url(#sh)"/>

<!-- dialog -->
<rect x="884.5" y="278.5" width="681" height="932" rx="21" fill="none" stroke="#0e0e10" stroke-width="1.5"/>
<g clip-path="url(#dlg)">
<rect x="885" y="279" width="680" height="931" fill="#202124"/>
<rect x="885" y="279" width="680" height="57" fill="#37383b"/>
<rect x="885" y="336" width="680" height="1.5" fill="#0f1012"/>
</g>
<rect x="885.5" y="280" width="679" height="929.5" rx="20" fill="none" stroke="#58595c" stroke-width="2"/>
<circle cx="912" cy="308" r="12" fill="#ff5f57"/><circle cx="952" cy="308" r="12" fill="#febc2e"/><circle cx="992" cy="308" r="12" fill="#28c840"/>
<text x="1138" y="315" font-size="27" font-weight="700" style="fill:#a9abad" textLength="175" lengthAdjust="spacingAndGlyphs">Detaylı Rapor</text>
<text x="935" y="416.5" font-size="40" font-weight="700" textLength="98" lengthAdjust="spacingAndGlyphs">Oyun</text>
<text x="1237" y="416.5" font-size="40" font-weight="700" textLength="66" lengthAdjust="spacingAndGlyphs">Kişi</text>
<text x="1415.5" y="416.5" font-size="40" font-weight="700" textLength="94" lengthAdjust="spacingAndGlyphs">Tutar</text>
<text class="t" x="933" y="486" textLength="254" lengthAdjust="spacingAndGlyphs">Kum Havuzu 30 dk</text><text class="t" x="1235.5" y="486" textLength="27" lengthAdjust="spacingAndGlyphs">x1</text><text class="t" x="1413.5" y="486" textLength="55" lengthAdjust="spacingAndGlyphs">90₺</text>
<text class="t" x="933" y="558.5" textLength="255" lengthAdjust="spacingAndGlyphs">Kum Havuzu 60 dk</text><text class="t" x="1235.5" y="558.5" textLength="33" lengthAdjust="spacingAndGlyphs">x0</text><text class="t" x="1413.5" y="558.5" textLength="37" lengthAdjust="spacingAndGlyphs">0₺</text>
<text class="t" x="934" y="631.5" textLength="228" lengthAdjust="spacingAndGlyphs">Oyun Parkı 30 dk</text><text class="t" x="1235.5" y="631.5" textLength="49" lengthAdjust="spacingAndGlyphs">x70</text><text class="t" x="1413.5" y="631.5" textLength="91" lengthAdjust="spacingAndGlyphs">6300₺</text>
<text class="t" x="934" y="704.5" textLength="228" lengthAdjust="spacingAndGlyphs">Oyun Parkı 60 dk</text><text class="t" x="1235.5" y="704.5" textLength="50" lengthAdjust="spacingAndGlyphs">x33</text><text class="t" x="1413.5" y="704.5" textLength="90" lengthAdjust="spacingAndGlyphs">4620₺</text>
<text class="t" x="934" y="797.5" textLength="160" lengthAdjust="spacingAndGlyphs">Toplam İptal</text><text class="t" x="1235.5" y="797.5" textLength="33" lengthAdjust="spacingAndGlyphs">x0</text><text class="t" x="1413.5" y="797.5" textLength="37" lengthAdjust="spacingAndGlyphs">0₺</text>
<text class="t" x="1235.5" y="887" textLength="70" lengthAdjust="spacingAndGlyphs">Nakit</text><text class="t" x="1413.5" y="887" textLength="93" lengthAdjust="spacingAndGlyphs">11010₺</text>
<text class="t" x="1235.5" y="959.5" textLength="139" lengthAdjust="spacingAndGlyphs">Kredi Kartı</text><text class="t" x="1413.5" y="959.5" textLength="37" lengthAdjust="spacingAndGlyphs">0₺</text>
<text class="b" x="1235.5" y="1053" textLength="113" lengthAdjust="spacingAndGlyphs">Toplam:</text><text class="b" x="1413.5" y="1053" textLength="102" lengthAdjust="spacingAndGlyphs">11010₺</text>
<rect x="925.5" y="1117" width="271" height="52" rx="6" fill="none" stroke="#3b3c40" stroke-width="2"/>
<text x="1011" y="1153" font-size="30" font-weight="700" style="fill:#70aaf5" textLength="100" lengthAdjust="spacingAndGlyphs">E-MAIL</text>
</svg>
</body></html>
